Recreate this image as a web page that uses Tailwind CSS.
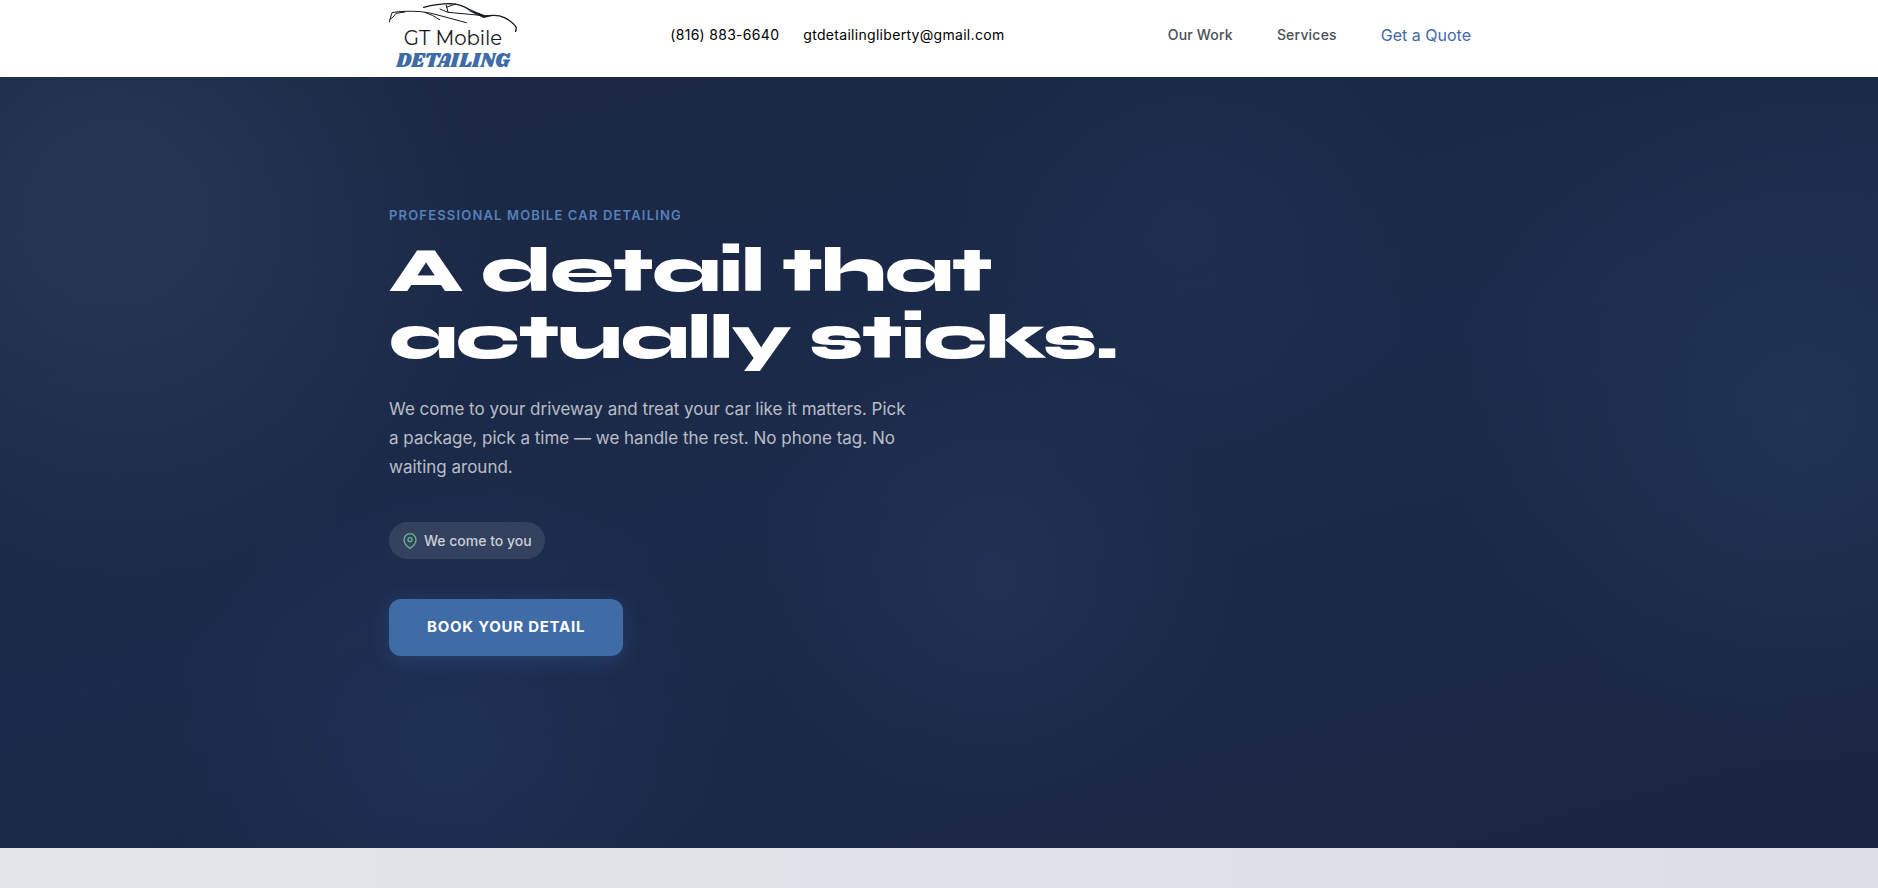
<!DOCTYPE html>
<html lang="en">
<head>
    <meta charset="UTF-8">
    <meta name="viewport" content="width=device-width, initial-scale=1.0">
    <title>GT Mobile Detailing</title>
    <script src="https://cdn.jsdelivr.net/npm/@tailwindcss/browser@4"></script>
</head>
<body class="bg-[#dfe3e8] font-['Inter',sans-serif] text-base text-black">

    <!-- Header -->
    <header class="bg-white">
        <div class="max-w-[1100px] h-[77px] mx-auto flex items-center justify-between">
            <a href="#" aria-label="GT Mobile Detailing" class="w-32 h-[77px] shrink-0">
                <svg viewBox="0 0 384 231" class="w-full h-full">
                    <g fill="none" stroke="#15191d" stroke-width="4" stroke-linecap="round" stroke-linejoin="round">
                        <path d="M104 22 Q145 11 185 11 Q212 12 240 28 L285 49"/>
                        <path d="M172 16 L177 36 M172 22 L200 12 M153 27 Q164 32 177 37 L285 47" stroke-width="3"/>
                        <path d="M1 66 Q3 56 9 38 Q45 31 95 35 Q125 38 150 46 L232 68" stroke-width="3"/>
                        <path d="M108 37 Q132 45 152 59 M3 58 Q14 52 21 40 L48 36" stroke-width="3"/>
                        <path d="M285 49 Q325 42 346 53 Q374 67 382 83 L380 94"/>
                    </g>
                    <path d="M235 31 Q265 37 288 46 L318 46 L284 54 Z" fill="#15191d"/>
                    <text x="192" y="135" text-anchor="middle" fill="#15191d" class="font-['Montserrat','Inter',sans-serif] text-[59px] font-normal">GT Mobile</text>
                    <text x="192" y="200" text-anchor="middle" fill="#3f6ba6" class="font-['Shrikhand','Liberation_Serif',serif] text-[59px]">DETAILING</text>
                </svg>
            </a>
            <div class="flex gap-6 text-sm leading-5 tracking-[0.3px] -mt-2">
                <a href="tel:8168836640">(816) 883-6640</a>
                <a href="mailto:gtdetailingliberty@gmail.com">gtdetailingliberty@gmail.com</a>
            </div>
            <nav class="flex items-center gap-11 pl-2.5 pr-[18px] -mt-2 text-sm font-medium tracking-[0.2px] text-[#4a4f58]">
                <a href="#work">Our Work</a>
                <a href="#services">Services</a>
                <a href="#quote" class="text-base font-normal tracking-normal text-[#3f6ba6]">Get a Quote</a>
            </nav>
        </div>
    </header>

    <!-- Hero -->
    <main class="bg-[radial-gradient(circle_at_6%_17%,#293b5acc_0,#293b5a00_390px),radial-gradient(circle_at_96%_44%,#213859aa_0,#21385900_350px),radial-gradient(circle_at_53%_65%,#24365a99_0,#24365a00_240px),radial-gradient(circle_at_63%_20%,#20365a66_0,#20365a00_240px),radial-gradient(circle_at_24%_87%,#20386277_0,#20386200_280px),linear-gradient(165deg,#1a2642_0%,#1c2b4b_50%,#1b2745_85%,#1a2442_100%)]">
        <div class="max-w-[1100px] min-h-[771px] mx-auto flex flex-col items-start pt-32">
            <p class="text-[13px] leading-5 font-semibold tracking-[0.09em] uppercase text-[#5481bb]">Professional mobile car detailing</p>
            <h1 class="mt-3 font-['Syne','Inter',sans-serif] text-[64px] leading-[67px] font-extrabold tracking-[-1px] text-white">A detail that<br>actually sticks.</h1>
            <p class="mt-6 max-w-[520px] text-[17px] leading-[29px] text-white/70">We come to your driveway and treat your car like it matters. Pick a package, pick a time — we handle the rest. No phone tag. No waiting around.</p>
            <div class="mt-10 h-[37px] px-[13px] flex items-center gap-1.5 rounded-full bg-white/10 text-sm font-medium text-white/75">
                <svg viewBox="0 0 24 24" fill="none" stroke="#68b58e" stroke-width="2" stroke-linecap="round" stroke-linejoin="round" class="size-4">
                    <path d="M21 10c0 7-9 13-9 13s-9-6-9-13a9 9 0 0 1 18 0z"/>
                    <circle cx="12" cy="10" r="3"/>
                </svg>
                We come to you
            </div>
            <button type="button" class="mt-10 h-[57px] px-[38px] rounded-xl bg-[#3f6ba6] text-[15px] font-bold tracking-[0.05em] uppercase text-white shadow-[0_4px_20px_#3f6ba64d]">Book your detail</button>
        </div>
    </main>

    <section class="h-10 bg-linear-to-r from-[#e2e5ea] to-[#dce0e6]"></section>

</body>
</html>
